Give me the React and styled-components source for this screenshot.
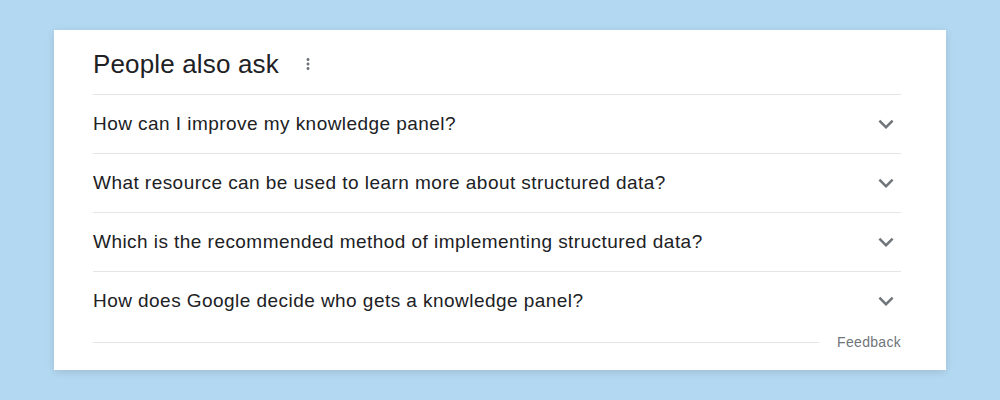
import styled, { createGlobalStyle } from "styled-components";

const GlobalStyle = createGlobalStyle`
  html, body {
    margin: 0;
    padding: 0;
    background: #b3d8f1;
  }
  body {
    font-family: "Liberation Sans", Arial, sans-serif;
  }
`;

const Page = styled.div`
  width: 1000px;
  height: 400px;
  padding-top: 30px;
  box-sizing: border-box;
`;

const Card = styled.div`
  width: 892px;
  height: 340px;
  margin-left: 54px;
  box-sizing: border-box;
  background: #fff;
  padding: 0 45px 0 39px;
  box-shadow: 0 2px 8px rgba(0, 0, 0, 0.12);
`;

const Header = styled.div`
  height: 64px;
  display: flex;
  align-items: center;
  gap: 20px;
  padding-top: 4px;
  box-sizing: border-box;
`;

const Title = styled.h2`
  margin: 0;
  font-size: 26px;
  font-weight: 400;
  letter-spacing: 0.15px;
  color: #202124;
`;

const Row = styled.div`
  height: 59px;
  border-top: 1px solid #e4e5e7;
  box-sizing: border-box;
  display: flex;
  align-items: center;
  justify-content: space-between;
`;

const Question = styled.span`
  font-size: 19px;
  letter-spacing: 0.45px;
  color: #202124;
`;

const Footer = styled.div`
  height: 24px;
  display: flex;
  align-items: center;
  gap: 18px;
`;

const Line = styled.div`
  flex: 1;
  height: 1px;
  background: #e4e5e7;
`;

const Feedback = styled.span`
  font-size: 14px;
  letter-spacing: 0.3px;
  color: #70757a;
`;

const Chevron = () => (
  <svg width="30" height="30" viewBox="0 0 24 24">
    <path
      fill="#70757a"
      d="M16.59 8.59L12 13.17 7.41 8.59 6 10l6 6 6-6z"
    />
  </svg>
);

const MoreVert = () => (
  <svg width="18" height="18" viewBox="0 0 24 24">
    <path
      fill="#70757a"
      d="M12 8c1.1 0 2-.9 2-2s-.9-2-2-2-2 .9-2 2 .9 2 2 2zm0 2c-1.1 0-2 .9-2 2s.9 2 2 2 2-.9 2-2-.9-2-2-2zm0 6c-1.1 0-2 .9-2 2s.9 2 2 2 2-.9 2-2-.9-2-2-2z"
    />
  </svg>
);

const questions = [
  "How can I improve my knowledge panel?",
  "What resource can be used to learn more about structured data?",
  "Which is the recommended method of implementing structured data?",
  "How does Google decide who gets a knowledge panel?",
];

export default function App() {
  return (
    <>
      <GlobalStyle />
      <Page>
        <Card>
          <Header>
            <Title>People also ask</Title>
            <MoreVert />
          </Header>
          {questions.map((q) => (
            <Row key={q}>
              <Question>{q}</Question>
              <Chevron />
            </Row>
          ))}
          <Footer>
            <Line />
            <Feedback>Feedback</Feedback>
          </Footer>
        </Card>
      </Page>
    </>
  );
}
